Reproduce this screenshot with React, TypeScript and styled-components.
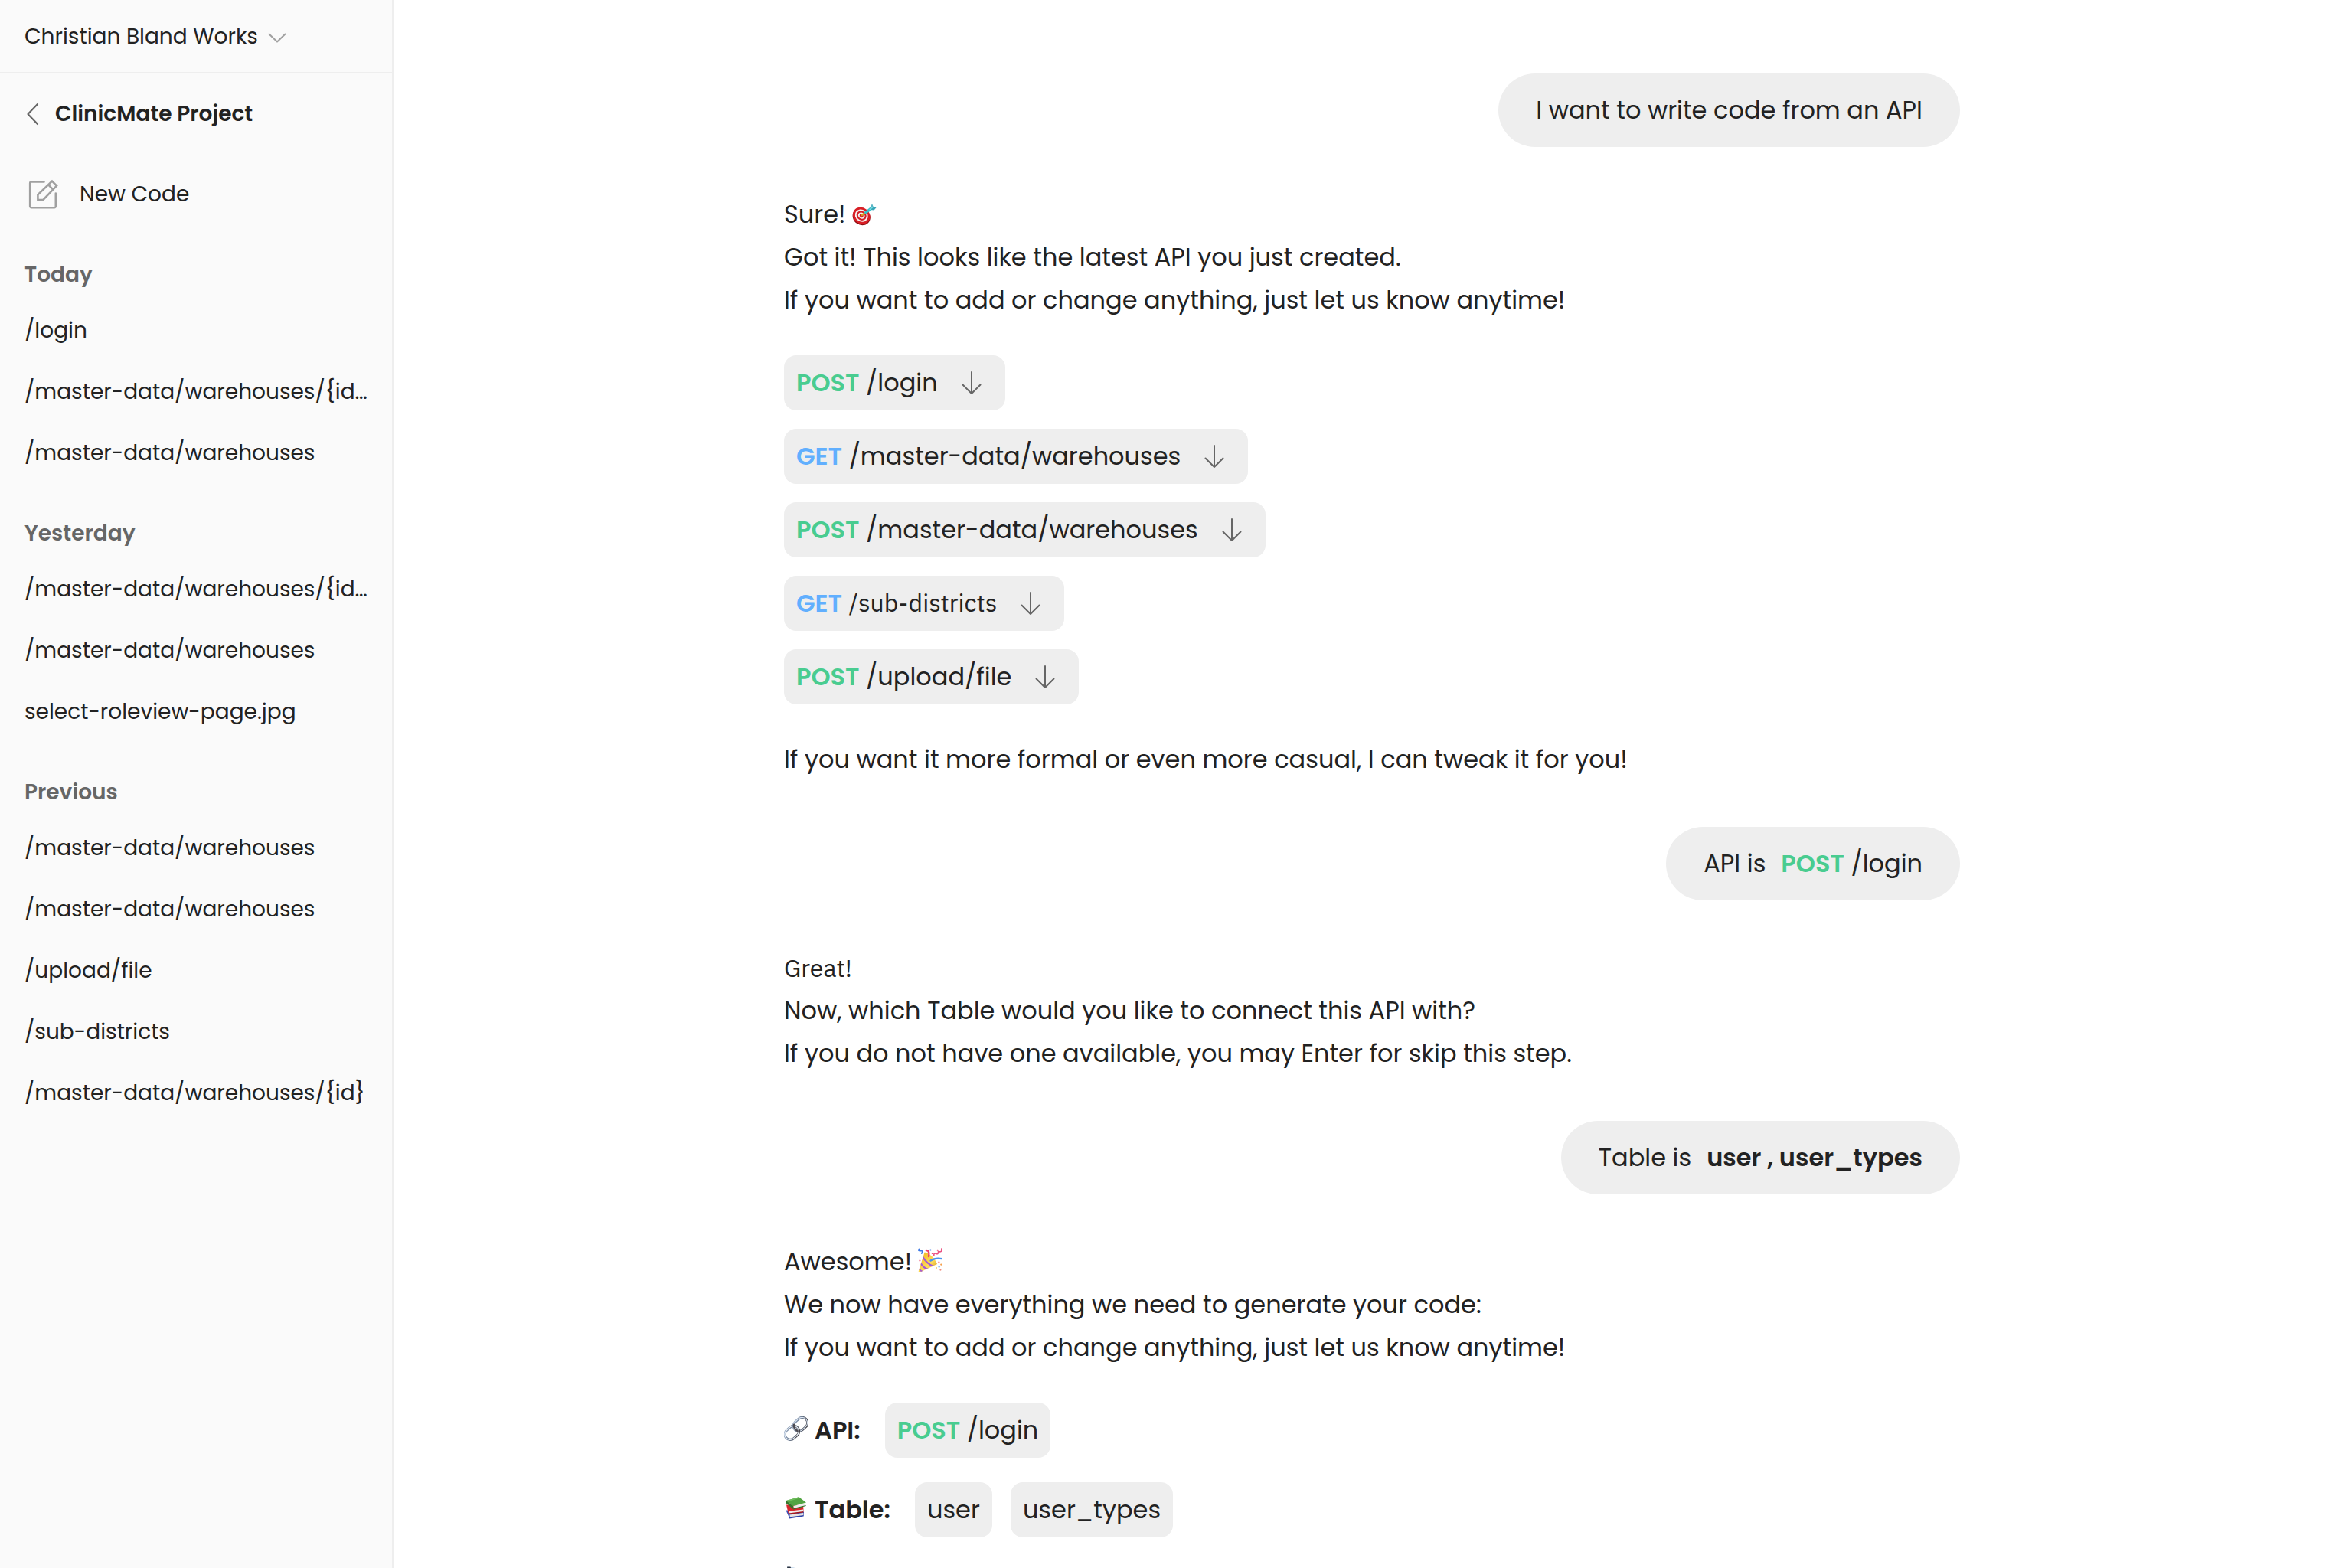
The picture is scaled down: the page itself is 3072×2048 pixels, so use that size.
import React from "react";
import styled, { createGlobalStyle } from "styled-components";

const color = {
  text: "#222222",
  muted: "#666666",
  faint: "#a0a0a0",
  line: "#eeeeee",
  chip: "#eeeeee",
  side: "#fafafa",
  post: "#49cc90",
  get: "#61affe",
};

const GlobalStyle = createGlobalStyle`
  * { box-sizing: border-box; }
  body {
    margin: 0;
    background: #ffffff;
    color: ${color.text};
    font-family: Poppins, Inter, "Open Sans", sans-serif;
  }
  button { font: inherit; color: inherit; background: none; border: 0; padding: 0; cursor: pointer; }
  a { color: inherit; text-decoration: none; }
  p, h1, h2, ul { margin: 0; padding: 0; font: inherit; }
  ul { list-style: none; }
  svg { display: block; flex: none; }
`;

const Page = styled.div`
  display: flex;
  height: 100vh;
  overflow: hidden;
`;

/* ---------- sidebar ---------- */

const Sidebar = styled.aside`
  flex: none;
  width: 512px;
  background: ${color.side};
  box-shadow: 2px 0 0 ${color.line};
  font-size: 28px;
  line-height: 42px;
`;

const Workspace = styled.header`
  display: flex;
  align-items: center;
  height: 96px;
  padding: 0 32px;
  box-shadow: inset 0 -2px 0 ${color.line};
`;

const WorkspaceButton = styled.button`
  display: flex;
  align-items: center;
  gap: 8px;
`;

const SideBody = styled.div`
  padding: 32px;
`;

const ProjectRow = styled.div`
  display: flex;
  align-items: center;
  gap: 8px;
  margin-bottom: 60px;
`;

const ProjectTitle = styled.h1`
  font-weight: 600;
`;

const NewCodeButton = styled.button`
  display: flex;
  align-items: center;
  gap: 24px;
  height: 48px;
  margin-bottom: 48px;
`;

const History = styled.nav`
  display: flex;
  flex-direction: column;
  gap: 32px;
`;

const GroupTitle = styled.h2`
  color: ${color.muted};
  font-weight: 600;
  line-height: 66px;
`;

const HistoryLink = styled.a`
  display: block;
  line-height: 80px;
  white-space: nowrap;
`;

/* ---------- conversation ---------- */

const Main = styled.main`
  flex: 1;
  min-width: 0;
  padding: 96px 64px 0;
  font-size: 32px;
  line-height: 48px;
`;

const Thread = styled.div`
  display: flex;
  flex-direction: column;
  gap: 64px;
  max-width: 1536px;
  margin: 0 auto;
`;

const UserBubble = styled.div`
  display: flex;
  gap: 20px;
  align-self: flex-end;
  padding: 24px 49px;
  border-radius: 48px;
  background: ${color.chip};
`;

const Reply = styled.section`
  display: flex;
  flex-direction: column;
  gap: 48px;
`;

const Lines = styled.div`
  display: flex;
  flex-direction: column;
  gap: 8px;
`;

const Line = styled.p<{ $plex?: boolean }>`
  display: flex;
  align-items: center;
  gap: 8px;
  ${(p) => p.$plex && `font-family: "IBM Plex Sans", "Open Sans", sans-serif;`}
`;

const EndpointList = styled.ul`
  display: flex;
  flex-direction: column;
  align-items: flex-start;
  gap: 24px;
`;

const Chip = styled.span`
  display: flex;
  align-items: center;
  gap: 16px;
  padding: 12px 16px;
  border-radius: 16px;
  background: ${color.chip};
`;

const ExpandButton = styled.button`
  display: flex;
  align-items: center;
  justify-content: center;
  width: 56px;
  height: 48px;
`;

const Method = styled.span<{ $verb: Verb }>`
  color: ${(p) => (p.$verb === "POST" ? color.post : color.get)};
  font-weight: 600;
`;

const Path = styled.span<{ $plex?: boolean }>`
  line-height: 1;
  ${(p) => p.$plex && `font-family: "IBM Plex Sans", "Open Sans", sans-serif;`}
`;

const Strong = styled.strong`
  font-weight: 600;
`;

const Summary = styled.div`
  display: flex;
  flex-direction: column;
  gap: 32px;
`;

const SummaryRow = styled.div`
  display: flex;
  align-items: center;
  gap: 32px;
  min-height: 48px;
`;

const SummaryLabel = styled.span`
  display: flex;
  align-items: center;
  gap: 8px;
  font-weight: 600;
`;

const ChipRow = styled.div`
  display: flex;
  gap: 24px;
`;

/* ---------- icons ---------- */

const ChevronDown = () => (
  <svg width="32" height="32" viewBox="0 0 32 32" fill="none" stroke={color.faint} strokeWidth="2" strokeLinecap="round" strokeLinejoin="round" aria-hidden="true">
    <path d="M6.5 12.5 17 22.5 27.5 12.5" />
  </svg>
);

const ChevronLeft = () => (
  <svg width="32" height="32" viewBox="0 0 32 32" fill="none" stroke={color.muted} strokeWidth="2.2" strokeLinecap="round" strokeLinejoin="round" aria-hidden="true">
    <path d="M17 3 4.5 16 17 29" />
  </svg>
);

const ComposeIcon = () => (
  <svg width="48" height="48" viewBox="0 0 48 48" fill="none" stroke={color.faint} strokeWidth="2.6" strokeLinecap="round" strokeLinejoin="round" aria-hidden="true">
    <path d="M25.5 7.5H9a1.8 1.8 0 0 0-1.8 1.8V39.4A1.8 1.8 0 0 0 9 41.2H39a1.8 1.8 0 0 0 1.8-1.8V22.5" />
    <path d="M36 6.6 42 12.6 24.4 31H17.4V24.4Z" strokeLinejoin="miter" />
    <path d="M31.4 11.6 37.2 17.4" strokeLinecap="butt" />
  </svg>
);

const ArrowDown = () => (
  <svg width="32" height="32" viewBox="0 0 32 32" fill="none" stroke={color.muted} strokeWidth="2" strokeLinecap="round" strokeLinejoin="round" aria-hidden="true">
    <path d="M16 2V30M4.5 18.5 16 30 27.5 18.5" />
  </svg>
);

const TargetEmoji = () => (
  <svg width="32" height="36" viewBox="0 0 32 36" role="img" aria-label="target">
    <g transform="translate(0 -1) rotate(35 12 21)">
      <ellipse cx="12.8" cy="21.8" rx="12" ry="10.6" fill="#8f0f14" />
      <ellipse cx="12" cy="20.6" rx="11.8" ry="10.4" fill="#d81f26" />
      <ellipse cx="12" cy="20.6" rx="8.8" ry="7.8" fill="#f6f1f0" />
      <ellipse cx="12" cy="20.6" rx="6.8" ry="5.9" fill="#d32027" />
      <ellipse cx="12" cy="20.6" rx="4.6" ry="3.9" fill="#f6f1f0" />
      <ellipse cx="12" cy="20.6" rx="2.6" ry="2.2" fill="#cc1c22" />
    </g>
    <path d="M12 19.6 17.6 15.6" stroke="#d9a21b" strokeWidth="2.4" />
    <path d="M16.6 16.6 26.4 9" stroke="#35c0cb" strokeWidth="3.6" />
    <path d="M22.6 10 26.2 4 27.6 8.2Z" fill="#58b4c4" />
    <path d="M24 12 26.8 7.8 32 8.6 28.6 12.6Z" fill="#3aa7b8" />
    <path d="M22.6 12 27.6 8" stroke="#7fe0e6" strokeWidth="1.2" />
  </svg>
);

const PartyEmoji = () => (
  <svg width="32" height="36" viewBox="0 0 32 36" role="img" aria-label="party popper">
    <defs>
      <linearGradient id="cone" x1="0" y1="0" x2="1" y2="1">
        <stop offset="0.2" stopColor="#f3bf2b" />
        <stop offset="0.6" stopColor="#ffdc5a" />
        <stop offset="1" stopColor="#c98a12" />
      </linearGradient>
      <clipPath id="coneClip">
        <path d="M8.6 5.4C14 6 22.6 13.6 25 21L3 31.6Q0 32.4 0.8 30Z" />
      </clipPath>
    </defs>
    <path d="M8.6 5.4C14 6 22.6 13.6 25 21L3 31.6Q0 32.4 0.8 30Z" fill="url(#cone)" />
    <g clipPath="url(#coneClip)" fill="none" stroke="#a457d6" strokeWidth="2.2">
      <path d="M6.4 12Q11 20 20 24" />
      <path d="M3.6 20Q7 26 13.4 28" />
      <path d="M1.4 26.6Q3 30 6.4 31" />
    </g>
    <path d="M16.6 16.6Q22.6 12.4 31.2 14.2" fill="none" stroke="#4a94ee" strokeWidth="2.4" strokeLinecap="round" />
    <path d="M10.8 3Q15.6 3 14 11" fill="none" stroke="#ee4069" strokeWidth="2.4" strokeLinecap="round" />
    <path d="M1.4 1.4Q-0.4 4 3.4 3.6T4.8 7" fill="none" stroke="#3d78e6" strokeWidth="1.8" strokeLinecap="round" />
    <path d="M20.8 9.4Q20.6 6 23.6 7.4T26.6 4.6Q31.8 6 30.8 1" fill="none" stroke="#ea5383" strokeWidth="1.7" strokeLinecap="round" />
    <g>
      <circle cx="16.4" cy="2.6" r="1" fill="#3d78e6" />
      <circle cx="18.6" cy="7" r="0.9" fill="#ee4069" />
      <circle cx="25.6" cy="2.8" r="1" fill="#ee4069" />
      <circle cx="2.4" cy="16.4" r="1" fill="#ee4069" />
      <circle cx="27.4" cy="18.6" r="1" fill="#ee4069" />
      <circle cx="30.4" cy="21.6" r="1.2" fill="#f6a04c" />
      <circle cx="27.6" cy="24.6" r="1.1" fill="#4a94ee" />
      <circle cx="29.4" cy="28.6" r="1.1" fill="#f08a7b" />
      <circle cx="24.2" cy="26" r="0.8" fill="#f3bf2b" />
    </g>
  </svg>
);

const LinkEmoji = () => (
  <svg width="32" height="36" viewBox="0 0 32 36" role="img" aria-label="link" fill="none">
    <defs>
      <linearGradient id="steel" x1="0" y1="0" x2="1" y2="1">
        <stop offset="0" stopColor="#9fb2cc" />
        <stop offset="0.4" stopColor="#6f8098" />
        <stop offset="1" stopColor="#3b3638" />
      </linearGradient>
    </defs>
    <g transform="rotate(-42 21.6 10.4)">
      <rect x="11.6" y="3.4" width="20" height="14" rx="7" stroke="url(#steel)" strokeWidth="3.2" />
      <rect x="11.4" y="3.2" width="20" height="14" rx="7" stroke="#dfe9f5" strokeWidth="1.1" />
    </g>
    <g transform="rotate(-42 10.4 21.4)">
      <rect x="0.4" y="14.4" width="20" height="14" rx="7" stroke="url(#steel)" strokeWidth="3.2" />
      <rect x="0.2" y="14.2" width="20" height="14" rx="7" stroke="#eef4fb" strokeWidth="1.2" />
    </g>
    <path d="M13 10.6Q12.6 16.4 17.4 19" stroke="#4d4a50" strokeWidth="2.4" strokeLinecap="round" />
  </svg>
);

const BooksEmoji = () => (
  <svg width="32" height="36" viewBox="0 2 32 36" role="img" aria-label="books">
    <path d="M2.4 20.6 7 30.4 26 27.6V22.4Z" fill="#3c50b8" />
    <path d="M7.4 26.6 25.4 24V28L8 30.4Z" fill="#e6e4e2" />
    <path d="M6.6 29.6 25.6 27V28.6L7 31.4Z" fill="#2f43a8" />
    <path d="M3 13.6 5.6 24.4 25.6 21.6 25 14Z" fill="#d8262c" />
    <path d="M6.8 21.8 25.2 19.4V23L7.4 25.4Z" fill="#f0eceb" />
    <path d="M5.8 24.6 25.4 22V23.4L6.4 26Z" fill="#a5161b" />
    <path d="M3 8 19.4 3.2 29 10.6 12 15.2Z" fill="#52a442" />
    <path d="M3 8 19.4 3.2 21 4.4 4.2 9.4Z" fill="#6fbd5c" />
    <path d="M12.4 15 28.2 11.4V14.4L12.8 18.2Z" fill="#eeeceb" />
    <path d="M3 8 12 15.2 12.6 19.4 2.8 11.4Z" fill="#33762a" />
    <path d="M12.4 18 28.6 14V15L12.6 19.4Z" fill="#33762a" />
  </svg>
);

const NotebookEmoji = () => (
  <svg width="32" height="36" viewBox="0 0 32 36" role="img" aria-label="notebook">
    <path d="M4.4 0.6 13 1.6 28 6V28L8 32 3 26Z" fill="#b9cfe6" />
    <path d="M4.2 0.6H8.4L10 4 9.4 31 3 26Z" fill="#2b3340" />
  </svg>
);

/* ---------- data ---------- */

type Verb = "POST" | "GET";

const history = [
  { title: "Today", items: ["/login", "/master-data/warehouses/{id…", "/master-data/warehouses"] },
  { title: "Yesterday", items: ["/master-data/warehouses/{id…", "/master-data/warehouses", "select-roleview-page.jpg"] },
  {
    title: "Previous",
    items: [
      "/master-data/warehouses",
      "/master-data/warehouses",
      "/upload/file",
      "/sub-districts",
      "/master-data/warehouses/{id}",
    ],
  },
];

const endpoints: { verb: Verb; path: string; plex?: boolean }[] = [
  { verb: "POST", path: "/login" },
  { verb: "GET", path: "/master-data/warehouses" },
  { verb: "POST", path: "/master-data/warehouses" },
  { verb: "GET", path: "/sub-districts", plex: true },
  { verb: "POST", path: "/upload/file" },
];

const Endpoint = ({ verb, path, plex }: { verb: Verb; path: string; plex?: boolean }) => (
  <span>
    <Method $verb={verb}>{verb}</Method> <Path $plex={plex}>{path}</Path>
  </span>
);

export default function App() {
  return (
    <Page>
      <GlobalStyle />
      <Sidebar>
        <Workspace>
          <WorkspaceButton type="button">
            Christian Bland Works
            <ChevronDown />
          </WorkspaceButton>
        </Workspace>
        <SideBody>
          <ProjectRow>
            <button type="button" aria-label="Back">
              <ChevronLeft />
            </button>
            <ProjectTitle>ClinicMate Project</ProjectTitle>
          </ProjectRow>
          <NewCodeButton type="button">
            <ComposeIcon />
            New Code
          </NewCodeButton>
          <History>
            {history.map((group) => (
              <section key={group.title}>
                <GroupTitle>{group.title}</GroupTitle>
                <ul>
                  {group.items.map((item, i) => (
                    <li key={i}>
                      <HistoryLink href="#">{item}</HistoryLink>
                    </li>
                  ))}
                </ul>
              </section>
            ))}
          </History>
        </SideBody>
      </Sidebar>

      <Main>
        <Thread>
          <UserBubble>I want to write code from an API</UserBubble>

          <Reply>
            <Lines>
              <Line>
                Sure! <TargetEmoji />
              </Line>
              <Line>Got it! This looks like the latest API you just created.</Line>
              <Line>If you want to add or change anything, just let us know anytime!</Line>
            </Lines>
            <EndpointList>
              {endpoints.map((e) => (
                <li key={e.verb + e.path}>
                  <Chip>
                    <Endpoint {...e} />
                    <ExpandButton type="button" aria-label={`Expand ${e.verb} ${e.path}`}>
                      <ArrowDown />
                    </ExpandButton>
                  </Chip>
                </li>
              ))}
            </EndpointList>
            <Line>If you want it more formal or even more casual, I can tweak it for you!</Line>
          </Reply>

          <UserBubble>
            <span>API is</span>
            <Endpoint verb="POST" path="/login" />
          </UserBubble>

          <Reply>
            <Lines>
              <Line $plex>Great!</Line>
              <Line>Now, which Table would you like to connect this API with?</Line>
              <Line>If you do not have one available, you may Enter for skip this step.</Line>
            </Lines>
          </Reply>

          <UserBubble>
            <span>Table is</span>
            <Strong>user , user_types</Strong>
          </UserBubble>

          <Reply>
            <Lines>
              <Line>
                Awesome! <PartyEmoji />
              </Line>
              <Line>We now have everything we need to generate your code:</Line>
              <Line>If you want to add or change anything, just let us know anytime!</Line>
            </Lines>
            <Summary>
              <SummaryRow>
                <SummaryLabel>
                  <LinkEmoji /> API:
                </SummaryLabel>
                <Chip>
                  <Endpoint verb="POST" path="/login" />
                </Chip>
              </SummaryRow>
              <SummaryRow>
                <SummaryLabel>
                  <BooksEmoji /> Table:
                </SummaryLabel>
                <ChipRow>
                  <Chip>user</Chip>
                  <Chip>user_types</Chip>
                </ChipRow>
              </SummaryRow>
              <SummaryRow>
                <NotebookEmoji />
              </SummaryRow>
            </Summary>
          </Reply>
        </Thread>
      </Main>
    </Page>
  );
}
